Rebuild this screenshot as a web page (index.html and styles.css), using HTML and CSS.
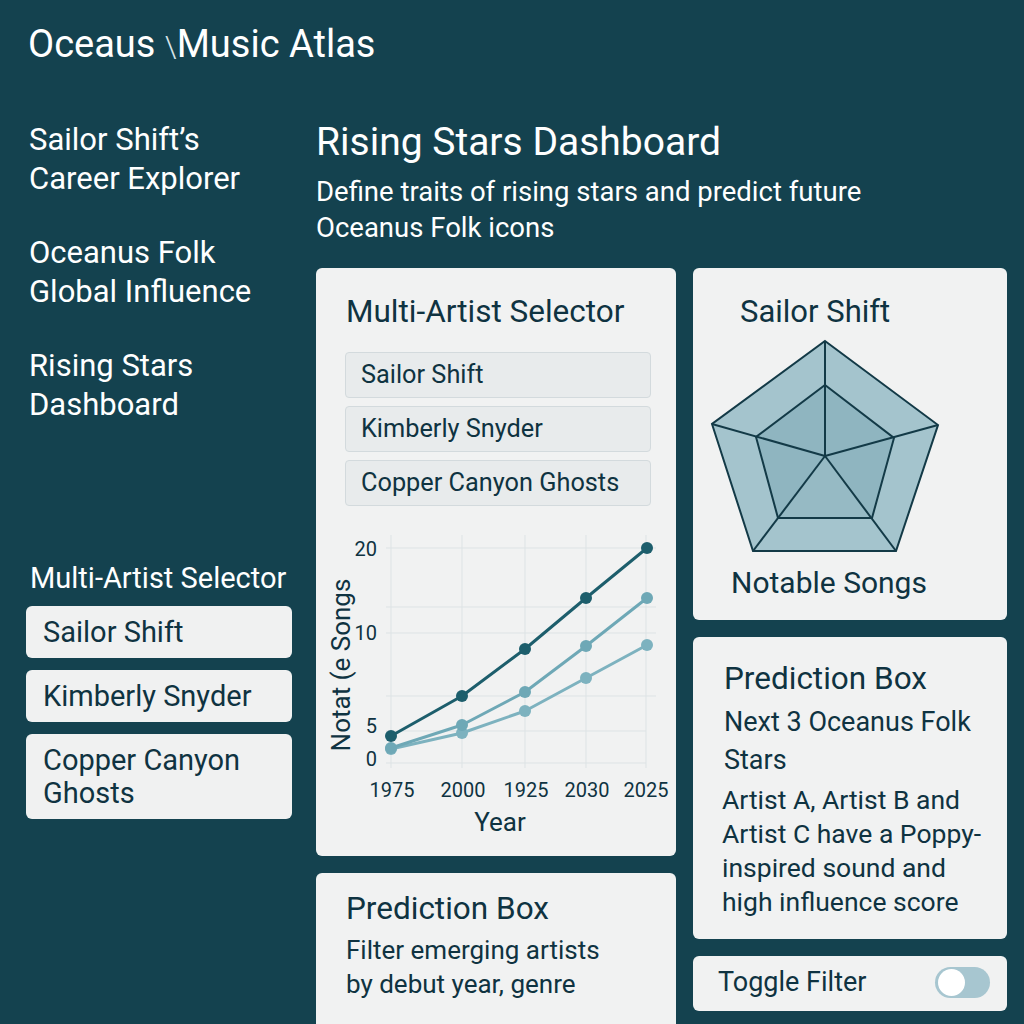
FILE: index.html
```html
<!DOCTYPE html>
<html>

	<head>
		<meta charset="utf-8">
		<title>Oceaus Music Atlas</title>
		<link rel="stylesheet" href="styles.css">
	</head>

	<body>
		<header class="top">Oceaus <span class="slash">\</span>Music Atlas</header>
		<div class="app">
			<aside class="side">
				<nav class="nav">
					<a class="nav-item">Sailor Shift’s<br>Career Explorer</a>
					<a class="nav-item">Oceanus Folk<br>Global Influence</a>
					<a class="nav-item">Rising Stars<br>Dashboard</a>
				</nav>
				<div class="side-select">
					<div class="side-title">Multi-Artist Selector</div>
					<div class="side-btn">Sailor Shift</div>
					<div class="side-btn">Kimberly Snyder</div>
					<div class="side-btn">Copper Canyon<br>Ghosts</div>
				</div>
			</aside>

			<main class="main">
				<h1 class="page-title">Rising Stars Dashboard</h1>
				<p class="page-sub">Define traits of rising stars and predict future<br>Oceanus Folk icons</p>

				<div class="cards">
					<div class="col">
						<section class="card card-select">
							<h2 class="card-title">Multi-Artist Selector</h2>
							<ul class="pick-list">
								<li>Sailor Shift</li>
								<li>Kimberly Snyder</li>
								<li>Copper Canyon Ghosts</li>
							</ul>
							<!-- chart coords = page coords - (316, 530) -->
							<svg class="chart" width="360" height="315" viewBox="316 530 360 315">
								<g class="grid">
									<line x1="391" y1="535" x2="391" y2="768"/>
									<line x1="462" y1="535" x2="462" y2="768"/>
									<line x1="525" y1="535" x2="525" y2="768"/>
									<line x1="586" y1="535" x2="586" y2="768"/>
									<line x1="646" y1="535" x2="646" y2="768"/>
									<line x1="386" y1="548" x2="656" y2="548"/>
									<line x1="386" y1="607" x2="656" y2="607"/>
									<line x1="386" y1="633" x2="656" y2="633"/>
									<line x1="386" y1="696" x2="656" y2="696"/>
									<line x1="386" y1="731" x2="646" y2="731"/>
									<line x1="386" y1="763" x2="646" y2="763"/>
								</g>
								<g class="ticks">
									<text x="377" y="556" text-anchor="end">20</text>
									<text x="377" y="640" text-anchor="end">10</text>
									<text x="377" y="733" text-anchor="end">5</text>
									<text x="377" y="766" text-anchor="end">0</text>
									<text x="392" y="797" text-anchor="middle">1975</text>
									<text x="463" y="797" text-anchor="middle">2000</text>
									<text x="526" y="797" text-anchor="middle">1925</text>
									<text x="587" y="797" text-anchor="middle">2030</text>
									<text x="646" y="797" text-anchor="middle">2025</text>
								</g>
								<text class="axis-title" x="500" y="831" text-anchor="middle">Year</text>
								<text class="axis-title" transform="translate(350 665) rotate(-90)" text-anchor="middle">Notat (e Songs</text>

								<polyline class="s3" points="391,749 462,733 525,711 586,678 647,645"/>
								<polyline class="s2" points="391,748 462,725 525,692 586,646 647,598"/>
								<polyline class="s1" points="391,736 462,696 525,649 586,598 647,548"/>
								<g class="d3">
									<circle cx="391" cy="749" r="6"/><circle cx="462" cy="733" r="6"/><circle cx="525" cy="711" r="6"/><circle cx="586" cy="678" r="6"/><circle cx="647" cy="645" r="6"/>
								</g>
								<g class="d2">
									<circle cx="391" cy="748" r="6"/><circle cx="462" cy="725" r="6"/><circle cx="525" cy="692" r="6"/><circle cx="586" cy="646" r="6"/><circle cx="647" cy="598" r="6"/>
								</g>
								<g class="d1">
									<circle cx="391" cy="736" r="6"/><circle cx="462" cy="696" r="6"/><circle cx="525" cy="649" r="6"/><circle cx="586" cy="598" r="6"/><circle cx="647" cy="548" r="6"/>
								</g>
							</svg>
						</section>

						<section class="card card-note">
							<h2 class="card-title">Prediction Box</h2>
							<p class="note-text">Filter emerging artists<br>by debut year, genre</p>
						</section>
					</div>

					<div class="col">
						<section class="card card-radar">
							<h2 class="radar-title">Sailor Shift</h2>
							<!-- radar coords = page coords - (693, 335) -->
							<svg class="radar" width="314" height="225" viewBox="693 335 314 225">
								<polygon class="ring" points="825,341 938,425 896,551 753,551 712,424"/>
								<polygon class="core" points="825,385 894,438 872,518 778,518 756,437"/>
								<polygon class="tri" points="825,456 872,518 778,518"/>
								<g class="spokes">
									<line x1="825" y1="456" x2="825" y2="341"/>
									<line x1="825" y1="456" x2="938" y2="425"/>
									<line x1="825" y1="456" x2="896" y2="551"/>
									<line x1="825" y1="456" x2="753" y2="551"/>
									<line x1="825" y1="456" x2="712" y2="424"/>
								</g>
								<polygon class="edge" points="825,385 894,438 872,518 778,518 756,437"/>
								<polygon class="edge" points="825,341 938,425 896,551 753,551 712,424"/>
							</svg>
							<div class="radar-foot">Notable Songs</div>
						</section>

						<section class="card card-predict">
							<h2 class="card-title">Prediction Box</h2>
							<div class="predict-head">Next 3 Oceanus Folk<br>Stars</div>
							<p class="predict-text">Artist A, Artist B and<br>Artist C have a Poppy-<br>inspired sound and<br>high influence score</p>
						</section>

						<section class="card card-toggle">
							<span class="toggle-label">Toggle Filter</span>
							<span class="switch"><span class="knob"></span></span>
						</section>
					</div>
				</div>
			</main>
		</div>
	</body>

</html>
```

FILE: styles.css
```css
html, body {
	margin: 0px;
	padding: 0px;
	height: 100%;
	overflow: hidden;
}
body {
	background-color: #14424f;
	color: #ffffff;
	font-family: Roboto, "Noto Sans", sans-serif;
}
.top {
	height: 114px;
	box-sizing: border-box;
	padding: 21px 0px 0px 28px;
	font-size: 38px;
	line-height: 46px;
}
.slash {
	font-weight: 300;
	font-size: 30px;
	color: #d8e4e8;
}
.app {
	display: grid;
	grid-template-columns: 314px 710px;
}
/* sidebar */
.side {
	padding-left: 26px;
}
.nav {
	display: flex;
	flex-direction: column;
	gap: 35px;
	padding: 6px 0px 0px 3px;
}
.nav-item {
	font-size: 31px;
	line-height: 39px;
	color: #ffffff;
}
.side-select {
	margin-top: 136px;
	display: flex;
	flex-direction: column;
	gap: 12px;
}
.side-title {
	font-size: 29px;
	line-height: 36px;
	padding-left: 4px;
	margin-bottom: -2px;
}
.side-btn {
	width: 266px;
	box-sizing: border-box;
	padding: 10px 17px 9px 17px;
	background-color: #f0f1f1;
	color: #0f3341;
	border-radius: 6px;
	font-size: 29px;
	line-height: 33px;
}
/* main */
.main {
	padding: 4px 0px 0px 2px;
}
.page-title {
	margin: 0px;
	font-weight: 400;
	font-size: 39px;
	line-height: 48px;
}
.page-sub {
	margin: 8px 0px 0px 0px;
	font-size: 27.5px;
	line-height: 36px;
}
.cards {
	margin-top: 22px;
	display: flex;
	gap: 17px;
}
.col {
	display: flex;
	flex-direction: column;
	gap: 17px;
}
.card {
	background-color: #f1f2f2;
	color: #0f3341;
	border-radius: 6px;
	box-sizing: border-box;
}
.card-title {
	margin: 0px;
	font-weight: 400;
	font-size: 31.5px;
	line-height: 40px;
}
.card-select {
	width: 360px;
	height: 588px;
	padding-top: 24px;
}
.card-select .card-title {
	padding-left: 30px;
}
.pick-list {
	list-style: none;
	margin: 20px 25px 0px 29px;
	padding: 0px;
	display: flex;
	flex-direction: column;
	gap: 8px;
}
.pick-list li {
	height: 46px;
	box-sizing: border-box;
	padding-left: 15px;
	background-color: #e8ebec;
	border: solid 1px #d3dadd;
	border-radius: 4px;
	font-size: 25.3px;
	line-height: 44px;
}
.chart {
	display: block;
	margin-top: 24px;
}
.grid line {
	stroke: #dde3e5;
	stroke-width: 1;
}
.ticks text {
	font-size: 20px;
	fill: #0f3341;
}
.axis-title {
	font-size: 26px;
	fill: #0f3341;
}
.s1, .s2, .s3 {
	fill: none;
	stroke-width: 3;
	stroke-linejoin: round;
}
.s1 {
	stroke: #1d5e6c;
}
.s2 {
	stroke: #6ea8b6;
}
.s3 {
	stroke: #7db2bf;
}
.d1 circle {
	fill: #1d5e6c;
}
.d2 circle {
	fill: #6ea8b6;
}
.d3 circle {
	fill: #7db2bf;
}
.card-note {
	width: 360px;
	height: 160px;
	padding: 16px 0px 0px 30px;
}
.note-text {
	margin: 4px 0px 0px 0px;
	font-size: 26px;
	line-height: 34px;
}
/* right column */
.card-radar {
	width: 314px;
	height: 352px;
	padding-top: 24px;
}
.radar-title {
	margin: 0px;
	font-weight: 400;
	font-size: 31px;
	line-height: 40px;
	padding-left: 47px;
	height: 43px;
}
.radar {
	display: block;
}
.ring {
	fill: #a4c4cd;
}
.core {
	fill: #8fb5c0;
}
.tri {
	fill: #96bac4;
}
.spokes line, .edge {
	fill: none;
	stroke: #133a47;
	stroke-width: 2;
	stroke-linejoin: miter;
}
.radar-foot {
	font-size: 30px;
	line-height: 40px;
	padding: 3px 0px 0px 38px;
}
.card-predict {
	width: 314px;
	height: 302px;
	padding: 22px 0px 0px 31px;
}
.predict-head {
	margin-top: 4px;
	font-size: 27px;
	line-height: 38px;
}
.predict-text {
	margin: 4px 0px 0px -2px;
	font-size: 26.5px;
	line-height: 34px;
}
.card-toggle {
	width: 314px;
	height: 55px;
	display: flex;
	align-items: center;
	justify-content: space-between;
	padding: 0px 17px 3px 25px;
}
.toggle-label {
	font-size: 27px;
}
.switch {
	width: 55px;
	height: 31px;
	border-radius: 16px;
	background-color: #a7c6d0;
	display: flex;
	align-items: center;
	padding-left: 3px;
	box-sizing: border-box;
}
.knob {
	width: 27px;
	height: 27px;
	border-radius: 50%;
	background-color: #ffffff;
}
```
